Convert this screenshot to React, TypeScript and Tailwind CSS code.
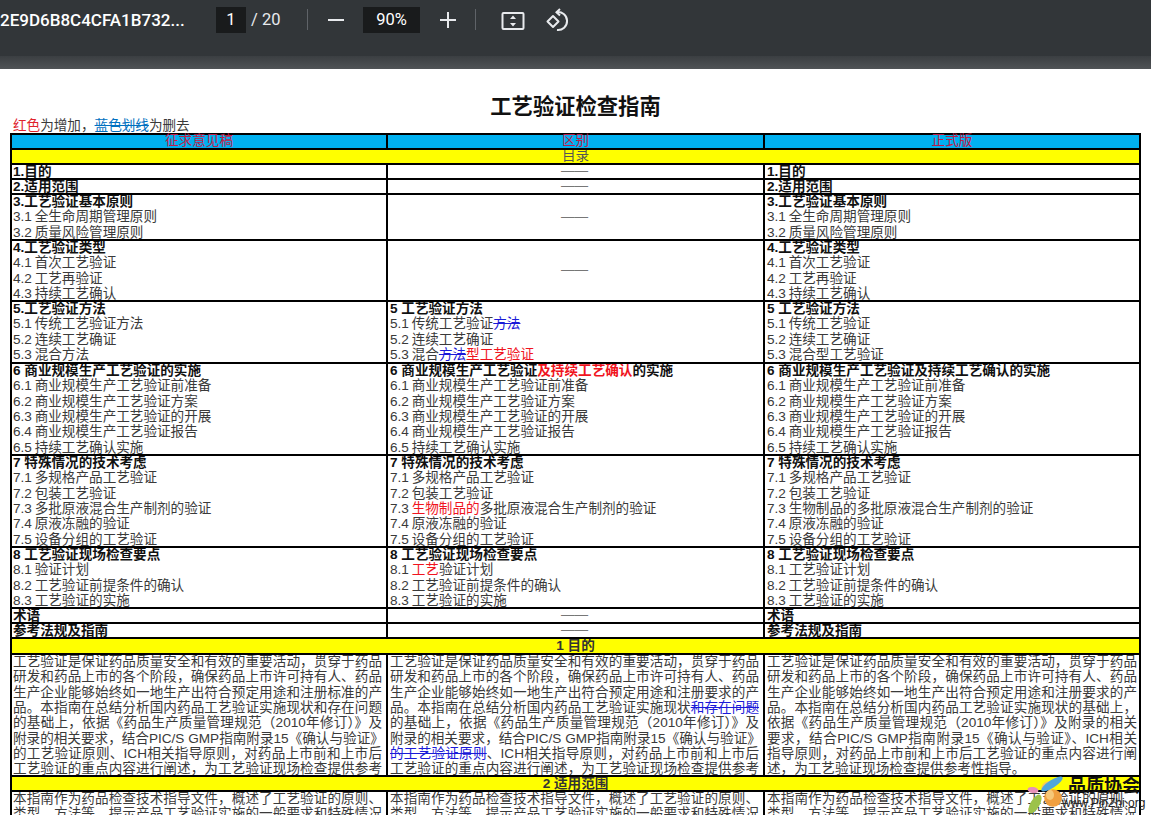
import React from "react";

const R = ({ c }: { c: React.ReactNode }) => <span className="text-[#f0141e]">{c}</span>;
const D = ({ c }: { c: React.ReactNode }) => <span className="text-[#1a1ad8] line-through">{c}</span>;
const B = ({ c }: { c: React.ReactNode }) => <div className="font-bold text-[#111]">{c}</div>;

type Cell = React.ReactNode;

const Dash = () => (
  <div className="flex h-full items-center justify-center leading-[11px] text-[#777]">——</div>
);

const Row = ({ h, cells }: { h: string; cells: Cell[] }) => (
  <div className={`grid grid-cols-[376px_377px_1fr] border-b-2 border-black ${h}`}>
    {cells.map((c, i) => (
      <div
        key={i}
        className={`min-w-0 overflow-hidden ${i === 0 ? "pl-px" : "pl-[2px]"} ${i < 2 ? "border-r-2 border-black pr-[4px]" : "pr-[2px]"}`}
      >
        <div className="-mt-[1px] h-full">{c}</div>
      </div>
    ))}
  </div>
);

const Band = ({ h, bg, children }: { h: string; bg: string; children: React.ReactNode }) => (
  <div className={`overflow-hidden border-b-2 border-black text-center ${h} ${bg}`}>{children}</div>
);

const Lines = ({ items }: { items: React.ReactNode[] }) => (
  <>
    {items.map((t, i) => (
      <div key={i} className="whitespace-nowrap [word-spacing:-1px]">{t}</div>
    ))}
  </>
);

const Just = ({ items, last }: { items: React.ReactNode[]; last?: boolean }) => (
  <>
    {items.map((t, i) => (
      <div
        key={i}
        className={`whitespace-nowrap ${last && i === items.length - 1 ? "" : "[text-align:justify] [text-align-last:justify]"}`}
      >
        {t}
      </div>
    ))}
  </>
);

const toc3 = <><B c="3.工艺验证基本原则" /><Lines items={["3.1 全生命周期管理原则", "3.2 质量风险管理原则"]} /></>;
const toc4 = <><B c="4.工艺验证类型" /><Lines items={["4.1 首次工艺验证", "4.2 工艺再验证", "4.3 持续工艺确认"]} /></>;
const toc6Items = ["6.1 商业规模生产工艺验证前准备", "6.2 商业规模生产工艺验证方案", "6.3 商业规模生产工艺验证的开展", "6.4 商业规模生产工艺验证报告", "6.5 持续工艺确认实施"];
const s7 = <B c="7 特殊情况的技术考虑" />;
const s8 = <B c="8 工艺验证现场检查要点" />;

const p1a = "工艺验证是保证药品质量安全和有效的重要活动，贯穿于药品";
const p1b = "研发和药品上市的各个阶段，确保药品上市许可持有人、药品";
const p2 = "本指南作为药品检查技术指导文件，概述了工艺验证的原则、";
const p2b = "类型、方法等，提示产品工艺验证实施的一般要求和特殊情况";

const Logo = () => (
  <div className="absolute left-[1024px] top-[776px] h-[39px] w-[127px]">
    <svg className="absolute left-0 top-0" width="46" height="39" viewBox="0 0 46 39">
      <ellipse cx="22" cy="10" rx="5.5" ry="3.6" fill="#f4c95c" transform="rotate(-45 22 10)" />
      <ellipse cx="28" cy="8" rx="12.5" ry="3.8" fill="#4fa6dc" transform="rotate(-33 28 8)" />
      <ellipse cx="9" cy="14" rx="5.5" ry="3" fill="#e690b8" transform="rotate(10 9 14)" />
      <ellipse cx="11" cy="28" rx="10.5" ry="4.6" fill="#9cc24a" transform="rotate(-60 11 28)" />
      <circle cx="29" cy="22" r="8.8" fill="#f0a040" />
      <ellipse cx="26" cy="19" rx="4" ry="5" fill="#f6c878" />
    </svg>
    <div className="absolute left-[44px] top-0 whitespace-nowrap text-[18px] font-bold leading-[20px] text-[#111]">品质协会</div>
    <div className="absolute left-[38px] top-[19px] whitespace-nowrap font-['Liberation_Sans'] text-[12px] leading-[16px] text-[#222]">www.PinZhi.org</div>
  </div>
);

export default function App() {
  return (
    <div className="relative h-[815px] w-[1151px] overflow-hidden bg-white font-['Liberation_Sans','Noto_Sans_CJK_SC',sans-serif]">
      {/* toolbar */}
      <div className="flex h-[56px] items-start bg-[#323639] font-['Roboto',sans-serif] text-white">
        <div className="mt-[10px] w-[192px] overflow-hidden whitespace-nowrap text-[17px] font-medium leading-[20px]">2E9D6B8C4CFA1B732...</div>
        <div className="ml-[24px] mt-[7px] flex h-[26px] w-[30px] items-center justify-center bg-[#191b1c] text-[16.5px]">1</div>
        <div className="ml-[5px] mt-[10px] w-[30px] whitespace-nowrap text-[16.5px] leading-[20px] text-[#e8eaed]">/ 20</div>
        <div className="ml-[26px] mt-[9px] h-[21px] w-px bg-[#5f6368]" />
        <svg className="ml-[20px] mt-[19px]" width="16" height="3"><rect width="16" height="2" y="0" fill="#e8eaed" /></svg>
        <div className="ml-[19px] mt-[7px] flex h-[26px] w-[57px] items-center justify-center bg-[#191b1c] text-[16.5px]">90%</div>
        <svg className="ml-[20px] mt-[12px]" width="16" height="16" viewBox="0 0 16 16"><path d="M0 8h16M8 0v16" stroke="#e8eaed" strokeWidth="2" /></svg>
        <div className="ml-[19px] mt-[9px] h-[21px] w-px bg-[#5f6368]" />
        <svg className="ml-[25px] mt-[10px]" width="24" height="22" viewBox="0 0 24 22" fill="none">
          <rect x="1.5" y="3" width="21" height="16" rx="1" stroke="#e8eaed" strokeWidth="2" />
          <path d="M12 5.5l3 3.5h-6zM12 16.5l3-3.5h-6z" fill="#e8eaed" />
        </svg>
        <svg className="ml-[21px] mt-[8px]" width="24" height="24" viewBox="0 0 24 24" fill="none">
          <path d="M10.5 4.2A9 9 0 1 1 11 22" stroke="#e8eaed" strokeWidth="2" />
          <path d="M14 1L10.5 4.2l3.5 3.3" stroke="#e8eaed" strokeWidth="2" />
          <path d="M7 8l5.5 5.5L7 19l-5.5-5.5z" stroke="#e8eaed" strokeWidth="2" strokeLinejoin="round" />
        </svg>
      </div>
      <div className="h-[13px] bg-gradient-to-b from-[#3b3f42] to-[#505356]" />

      {/* title */}
      <div className="h-[49px] pt-[26px] text-center text-[21.3px] font-bold leading-[24px] text-[#111]">工艺验证检查指南</div>

      {/* document */}
      <div className="text-[13.6px] leading-[15.35px] text-[#3a3a3a]">
        <div className="h-[15px] pl-[13px] leading-[15px]">
          <span className="text-[#e0222c]">红色</span>为增加，<span className="text-[#0070c0] line-through">蓝色划线</span>为删去
        </div>
        <div className="ml-[10px] w-[1131px] border-x-2 border-t-2 border-black">
          <div className="grid h-[15px] grid-cols-[376px_377px_1fr] border-b-2 border-black bg-[#00b0f0] text-center text-[#c01c48]">
            <div className="-mt-[2px] border-r-2 border-black">征求意见稿</div>
            <div className="-mt-[2px] border-r-2 border-black">区别</div>
            <div className="-mt-[2px]">正式版</div>
          </div>
          <Band h="h-[15px]" bg="bg-[#ffff00]"><div className="-mt-[2px] text-[#555]">目录</div></Band>
          <Row h="h-[15px]" cells={[<B c="1.目的" />, <Dash />, <B c="1.目的" />]} />
          <Row h="h-[15px]" cells={[<B c="2.适用范围" />, <Dash />, <B c="2.适用范围" />]} />
          <Row h="h-[46px]" cells={[toc3, <Dash />, toc3]} />
          <Row h="h-[61px]" cells={[toc4, <Dash />, toc4]} />
          <Row h="h-[62px]" cells={[
            <><B c="5.工艺验证方法" /><Lines items={["5.1 传统工艺验证方法", "5.2 连续工艺确证", "5.3 混合方法"]} /></>,
            <><B c="5 工艺验证方法" /><Lines items={[<>5.1 传统工艺验证<D c="方法" /></>, "5.2 连续工艺确证", <>5.3 混合<D c="方法" /><R c="型工艺验证" /></>]} /></>,
            <><B c="5 工艺验证方法" /><Lines items={["5.1 传统工艺验证", "5.2 连续工艺确证", "5.3 混合型工艺验证"]} /></>,
          ]} />
          <Row h="h-[92px]" cells={[
            <><B c="6 商业规模生产工艺验证的实施" /><Lines items={toc6Items} /></>,
            <><B c={<>6 商业规模生产工艺验证<span className="text-[#f0141e]">及持续工艺确认</span>的实施</>} /><Lines items={toc6Items} /></>,
            <><B c="6 商业规模生产工艺验证及持续工艺确认的实施" /><Lines items={toc6Items} /></>,
          ]} />
          <Row h="h-[92px]" cells={[
            <>{s7}<Lines items={["7.1 多规格产品工艺验证", "7.2 包装工艺验证", "7.3 多批原液混合生产制剂的验证", "7.4 原液冻融的验证", "7.5 设备分组的工艺验证"]} /></>,
            <>{s7}<Lines items={["7.1 多规格产品工艺验证", "7.2 包装工艺验证", <>7.3 <R c="生物制品的" />多批原液混合生产制剂的验证</>, "7.4 原液冻融的验证", "7.5 设备分组的工艺验证"]} /></>,
            <>{s7}<Lines items={["7.1 多规格产品工艺验证", "7.2 包装工艺验证", "7.3 生物制品的多批原液混合生产制剂的验证", "7.4 原液冻融的验证", "7.5 设备分组的工艺验证"]} /></>,
          ]} />
          <Row h="h-[61px]" cells={[
            <>{s8}<Lines items={["8.1 验证计划", "8.2 工艺验证前提条件的确认", "8.3 工艺验证的实施"]} /></>,
            <>{s8}<Lines items={[<>8.1 <R c="工艺" />验证计划</>, "8.2 工艺验证前提条件的确认", "8.3 工艺验证的实施"]} /></>,
            <>{s8}<Lines items={["8.1 工艺验证计划", "8.2 工艺验证前提条件的确认", "8.3 工艺验证的实施"]} /></>,
          ]} />
          <Row h="h-[15px]" cells={[<B c="术语" />, <Dash />, <B c="术语" />]} />
          <Row h="h-[15px]" cells={[<B c="参考法规及指南" />, <Dash />, <B c="参考法规及指南" />]} />
          <Band h="h-[16px]" bg="bg-[#ffff00]"><div className="-mt-[1px] font-bold text-[#333]">1 目的</div></Band>
          <Row h="h-[122px]" cells={[
            <Just items={[p1a, p1b, "生产企业能够始终如一地生产出符合预定用途和注册标准的产", "品。本指南在总结分析国内药品工艺验证实施现状和存在问题", "的基础上，依据《药品生产质量管理规范（2010年修订）》及", "附录的相关要求，结合PIC/S GMP指南附录15《确认与验证》", "的工艺验证原则、ICH相关指导原则，对药品上市前和上市后", "工艺验证的重点内容进行阐述，为工艺验证现场检查提供参考"]} />,
            <Just items={[p1a, p1b, "生产企业能够始终如一地生产出符合预定用途和注册要求的产", <>品。本指南在总结分析国内药品工艺验证实施现状<D c="和存在问题" /></>, "的基础上，依据《药品生产质量管理规范（2010年修订）》及", "附录的相关要求，结合PIC/S GMP指南附录15《确认与验证》", <><D c="的工艺验证原则" />、ICH相关指导原则，对药品上市前和上市后</>, "工艺验证的重点内容进行阐述，为工艺验证现场检查提供参考"]} />,
            <Just items={[p1a, p1b, "生产企业能够始终如一地生产出符合预定用途和注册要求的产", "品。本指南在总结分析国内药品工艺验证实施现状的基础上，", "依据《药品生产质量管理规范（2010年修订）》及附录的相关", "要求，结合PIC/S GMP指南附录15《确认与验证》、ICH相关", "指导原则，对药品上市前和上市后工艺验证的重点内容进行阐", "述，为工艺验证现场检查提供参考性指导。"]} last />,
          ]} />
          <Band h="h-[15px]" bg="bg-[#ffff00]"><div className="-mt-[1px] font-bold text-[#333]">2 适用范围</div></Band>
          <Row h="h-[60px]" cells={[
            <Just items={[p2, p2b]} />,
            <Just items={[p2, p2b]} />,
            <Just items={[p2, p2b]} />,
          ]} />
        </div>
      </div>
      <Logo />
    </div>
  );
}
